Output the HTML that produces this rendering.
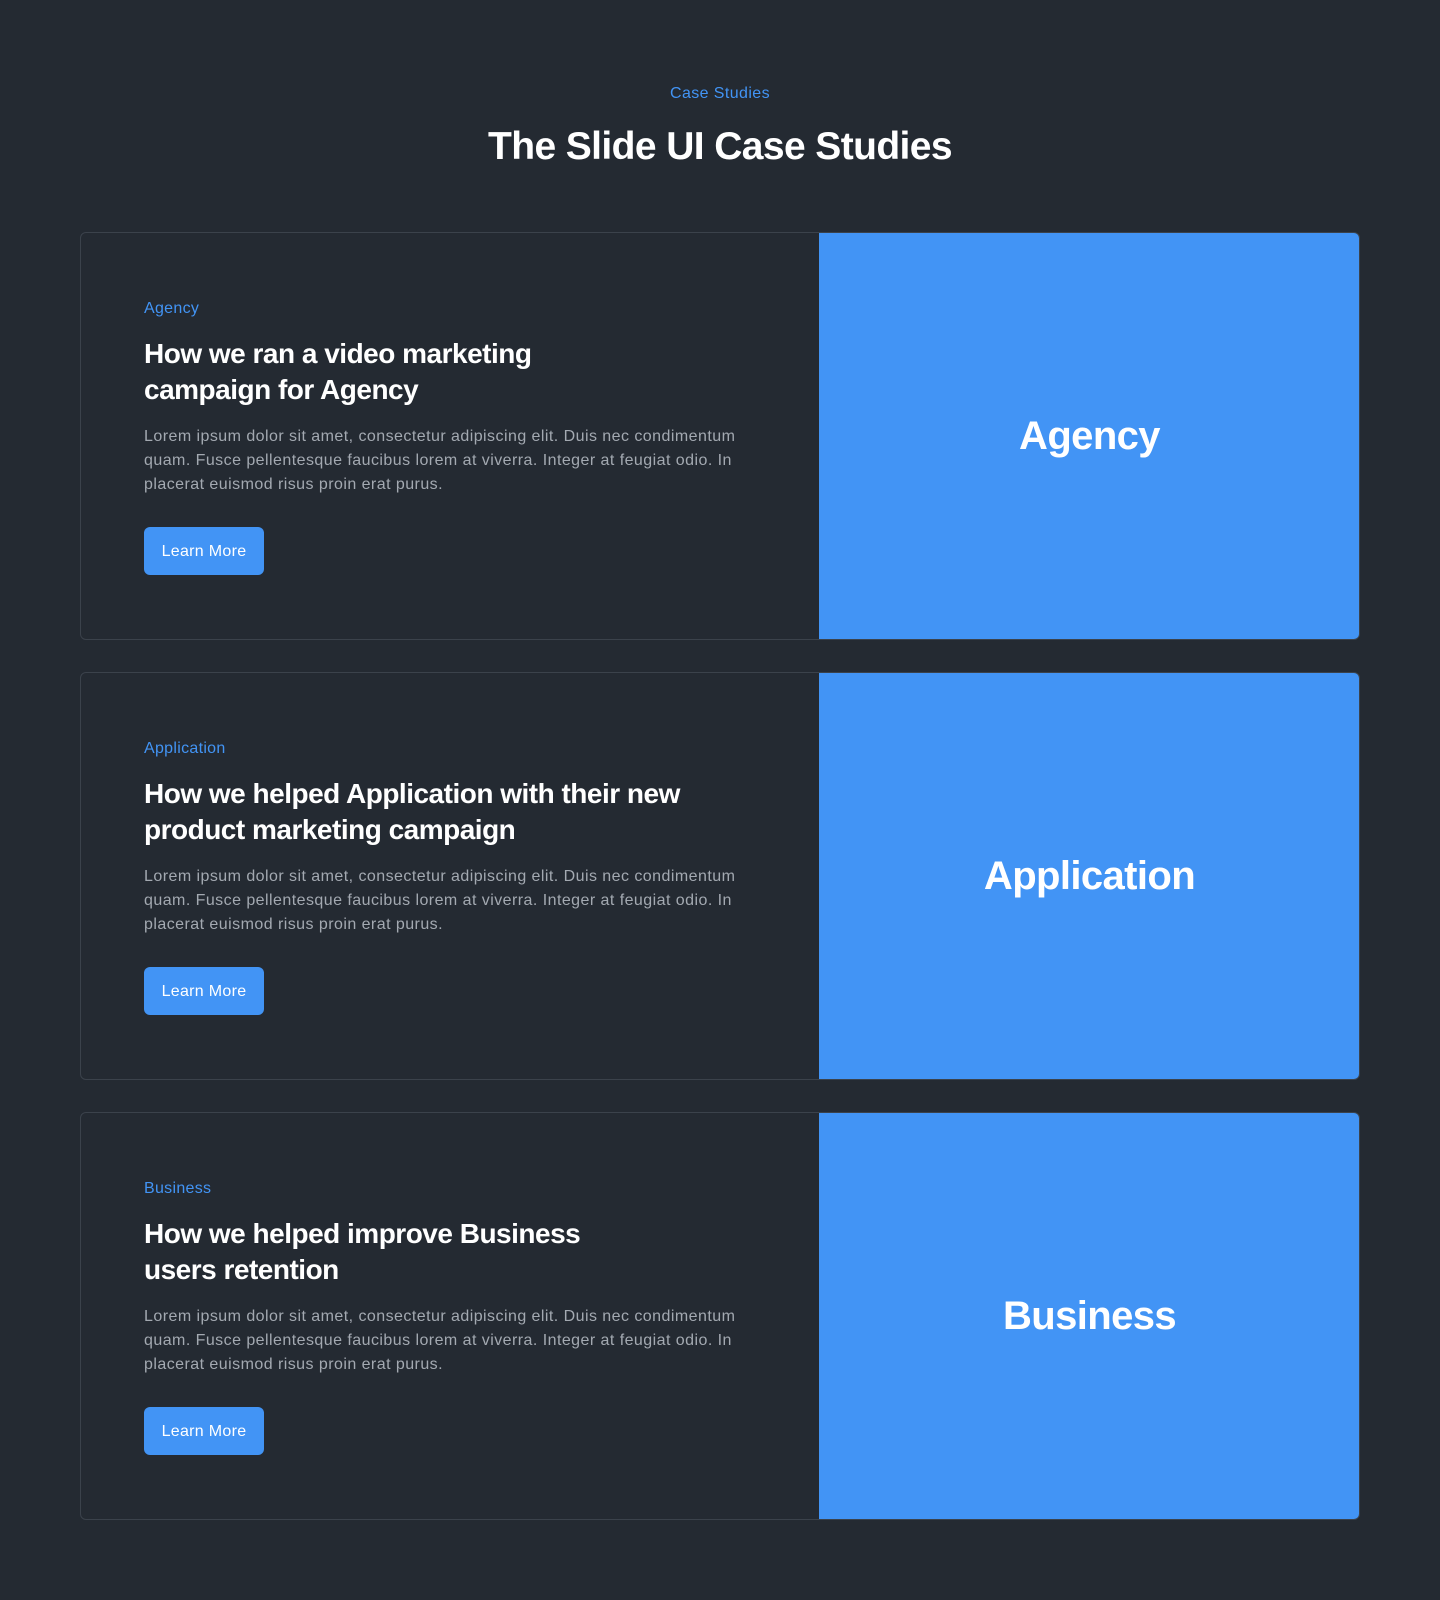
<!DOCTYPE html>
<html><head><meta charset="utf-8"><style>
*{margin:0;padding:0;box-sizing:border-box}
body{width:1440px;height:1600px;background:#242a32;font-family:"Liberation Sans",sans-serif;color:#fff;overflow:hidden}
.eyebrow{position:absolute;top:85px;left:0;width:1440px;text-align:center;color:#4294f5;font-size:16px;font-weight:500;letter-spacing:0.4px}
h1{position:absolute;top:125px;left:0;width:1440px;text-align:center;font-size:39px;font-weight:600;letter-spacing:-0.6px}
.card{position:absolute;left:80px;width:1280px;height:408px;border:1px solid #3b424b;border-radius:6px;overflow:hidden}
.img{position:absolute;left:738px;top:-1px;right:-1px;bottom:-1px;background:#4294f5;display:flex;align-items:center;justify-content:center;font-size:40px;font-weight:700;letter-spacing:-0.6px}
.cat{position:absolute;left:63px;top:67px;color:#4294f5;font-size:16px;letter-spacing:0.3px}
.h{position:absolute;left:63px;top:103px;font-size:28px;line-height:36px;font-weight:600;letter-spacing:-0.5px;white-space:nowrap}
.p{position:absolute;left:63px;top:192px;font-size:16px;line-height:24px;color:#a3a9b1;white-space:nowrap;letter-spacing:0.45px}
.btn{position:absolute;left:63px;top:294px;width:120px;height:48px;background:#4294f5;border-radius:6px;font-size:16px;display:flex;align-items:center;justify-content:center;letter-spacing:0.3px;padding-top:2px}
</style></head><body>
<div class="eyebrow">Case Studies</div>
<h1>The Slide UI Case Studies</h1>
<div class="card" style="top:232px">
<div class="cat">Agency</div>
<div class="h">How we ran a video marketing<br>campaign for Agency</div>
<div class="p">Lorem ipsum dolor sit amet, consectetur adipiscing elit. Duis nec condimentum<br>quam. Fusce pellentesque faucibus lorem at viverra. Integer at feugiat odio. In<br>placerat euismod risus proin erat purus.</div>
<div class="btn">Learn More</div>
<div class="img">Agency</div>
</div>
<div class="card" style="top:672px">
<div class="cat">Application</div>
<div class="h">How we helped Application with their new<br>product marketing campaign</div>
<div class="p">Lorem ipsum dolor sit amet, consectetur adipiscing elit. Duis nec condimentum<br>quam. Fusce pellentesque faucibus lorem at viverra. Integer at feugiat odio. In<br>placerat euismod risus proin erat purus.</div>
<div class="btn">Learn More</div>
<div class="img">Application</div>
</div>
<div class="card" style="top:1112px">
<div class="cat">Business</div>
<div class="h">How we helped improve Business<br>users retention</div>
<div class="p">Lorem ipsum dolor sit amet, consectetur adipiscing elit. Duis nec condimentum<br>quam. Fusce pellentesque faucibus lorem at viverra. Integer at feugiat odio. In<br>placerat euismod risus proin erat purus.</div>
<div class="btn">Learn More</div>
<div class="img">Business</div>
</div>
</body></html>
